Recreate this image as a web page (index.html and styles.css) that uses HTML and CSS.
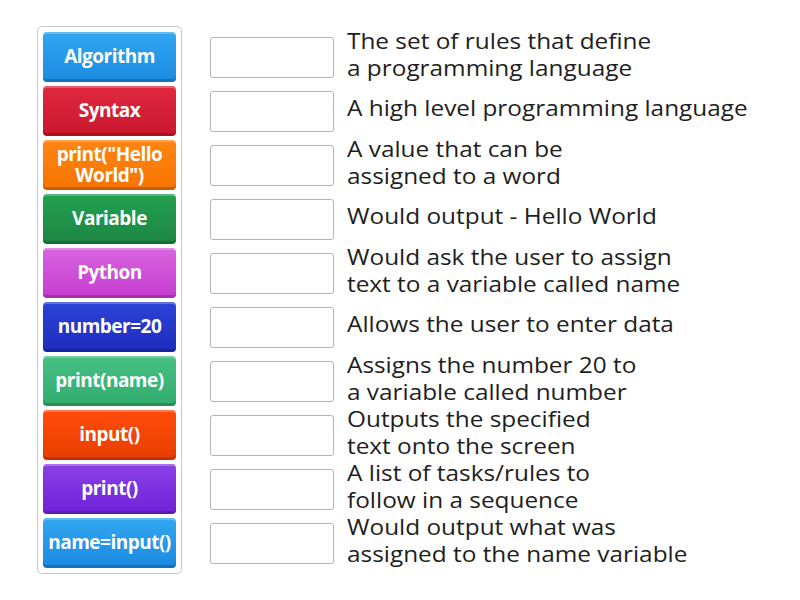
FILE: index.html
```html
<!DOCTYPE html>
<html>
<head>
<meta charset="utf-8">
<link rel="stylesheet" href="styles.css">
</head>
<body>
<div class="page">
  <div class="bank">
    <div class="tile c-blue">Algorithm</div>
    <div class="tile c-red">Syntax</div>
    <div class="tile c-orange">print("Hello World")</div>
    <div class="tile c-green">Variable</div>
    <div class="tile c-pink">Python</div>
    <div class="tile c-navy">number=20</div>
    <div class="tile c-mint">print(name)</div>
    <div class="tile c-redorange">input()</div>
    <div class="tile c-purple">print()</div>
    <div class="tile c-blue">name=input()</div>
  </div>
  <div class="targets">
    <div class="row"><div class="slot"></div><div class="def">The set of rules that define<br>a programming language</div></div>
    <div class="row"><div class="slot"></div><div class="def">A high level programming language</div></div>
    <div class="row"><div class="slot"></div><div class="def">A value that can be<br>assigned to a word</div></div>
    <div class="row"><div class="slot"></div><div class="def">Would output - Hello World</div></div>
    <div class="row"><div class="slot"></div><div class="def">Would ask the user to assign<br>text to a variable called name</div></div>
    <div class="row"><div class="slot"></div><div class="def">Allows the user to enter data</div></div>
    <div class="row"><div class="slot"></div><div class="def">Assigns the number 20 to<br>a variable called number</div></div>
    <div class="row"><div class="slot"></div><div class="def">Outputs the specified<br>text onto the screen</div></div>
    <div class="row"><div class="slot"></div><div class="def">A list of tasks/rules to<br>follow in a sequence</div></div>
    <div class="row"><div class="slot"></div><div class="def">Would output what was<br>assigned to the name variable</div></div>
  </div>
</div>
</body>
</html>
```
FILE: styles.css
```css
html, body {
  margin: 0;
  padding: 0;
  background: #ffffff;
}
body {
  font-family: "Open Sans", "Liberation Sans", sans-serif;
  color: #1e1e1e;
}
.page {
  display: flex;
  align-items: flex-start;
  padding: 26px 0 0 37px;
}
.bank {
  width: 133px;
  padding: 5px;
  border: 1px solid #c8c8c8;
  border-radius: 5px;
  display: flex;
  flex-direction: column;
  gap: 4px;
}
.tile {
  box-sizing: border-box;
  height: 50px;
  border-radius: 4px;
  display: flex;
  align-items: center;
  justify-content: center;
  text-align: center;
  color: #ffffff;
  font-weight: 700;
  font-size: 19px;
  letter-spacing: -0.5px;
  line-height: 21px;
  padding: 0 2px 1px;
  box-shadow: inset 0 2px 0 rgba(255,255,255,0.25), inset 0 -3px 0 rgba(0,0,0,0.18);
}
.c-blue { background: linear-gradient(#32a6f0, #1a8ae0); }
.c-red { background: linear-gradient(#e0283f, #c8182e); }
.c-orange { background: linear-gradient(#ff8514, #f77400); }
.c-green { background: linear-gradient(#23a050, #1d8642); }
.c-pink { background: linear-gradient(#d864e0, #c53ccf); }
.c-navy { background: linear-gradient(#2c44d8, #1d2cbc); }
.c-mint { background: linear-gradient(#46c083, #33ad6e); }
.c-redorange { background: linear-gradient(#ff4c0a, #e83e00); }
.c-purple { background: linear-gradient(#8a40e6, #6f22d8); }
.targets {
  margin-left: 28px;
  padding-top: 6px;
  display: flex;
  flex-direction: column;
  gap: 4px;
}
.row {
  height: 50px;
  display: flex;
  align-items: center;
}
.slot {
  box-sizing: border-box;
  width: 124px;
  height: 41px;
  border: 1px solid #b4b4b4;
  border-radius: 3px;
  background: #ffffff;
  flex: none;
}
.def {
  margin-left: 13px;
  margin-bottom: 5px;
  font-size: 21px;
  line-height: 27px;
  white-space: nowrap;
  transform: scaleX(1.16);
  transform-origin: left center;
}
```
